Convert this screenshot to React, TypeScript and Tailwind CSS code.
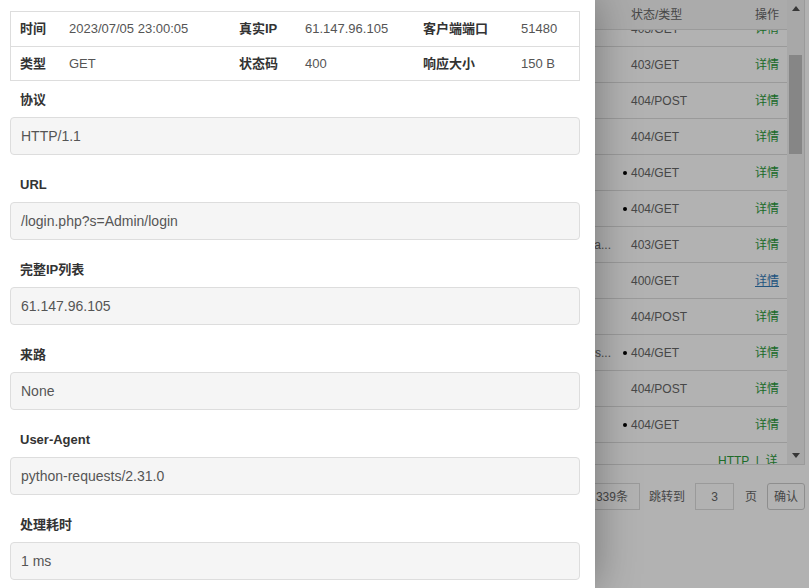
const info = [
  [
    ['时间', '2023/07/05 23:00:05'],
    ['真实IP', '61.147.96.105'],
    ['客户端端口', '51480'],
  ],
  [
    ['类型', 'GET'],
    ['状态码', '400'],
    ['响应大小', '150 B'],
  ],
]

const fields = [
  { label: '协议', value: 'HTTP/1.1' },
  { label: 'URL', value: '/login.php?s=Admin/login' },
  { label: '完整IP列表', value: '61.147.96.105' },
  { label: '来路', value: 'None' },
  { label: 'User-Agent', value: 'python-requests/2.31.0' },
  { label: '处理耗时', value: '1 ms' },
]

type Row = {
  agent?: string
  dot?: boolean
  status: string
  link?: boolean
  action?: string
}

const rows: Row[] = [
  { status: '403/GET' },
  { status: '403/GET' },
  { status: '404/POST' },
  { status: '404/GET' },
  { status: '404/GET', dot: true },
  { status: '404/GET', dot: true },
  {
    agent:
      'Mozilla/5.0 (Windows NT 10.0; Win64; x64) AppleWebKit/537.36 (KHTML, like Gecko) Chrome/92.0 Sa...',
    status: '403/GET',
  },
  { status: '400/GET', link: true },
  { status: '404/POST' },
  {
    agent: 'Mozilla/5.0 (X11; Linux x86_64; rv:60.0) Gecko/20100101 Firefox Windows...',
    status: '404/GET',
    dot: true,
  },
  { status: '404/POST' },
  { status: '404/GET', dot: true },
  { status: '', action: 'HTTP  |  详' },
]

function LogTable() {
  return (
    <div className="flex h-[465px] w-[805px] border-b border-r border-[#ddd]">
      <div className="flex-1 overflow-hidden">
        <div className="flex h-[30px] items-center border-b border-[#ddd] bg-[#f5f5f5] text-[12px] text-[#666]">
          <div className="w-[480px]" />
          <div className="w-[139px]" />
          <div className="w-[124px] pl-3">状态/类型</div>
          <div className="w-[44px] pl-3">操作</div>
        </div>
        <div className="h-[434px] overflow-hidden">
          <div className="-mt-[19px]">
            {rows.map((r, i) => (
              <div
                key={i}
                className="flex h-[36px] items-center border-b border-[#ddd] text-[12px] text-[#666]"
              >
                <div className="w-[480px]" />
                <div className="flex w-[139px] justify-end overflow-hidden whitespace-nowrap pr-2">
                  {r.agent}
                </div>
                <div className="flex w-[124px] items-center whitespace-nowrap pl-3">
                  {r.dot && (
                    <span className="-ml-[8px] mr-[4px] inline-block h-[4px] w-[4px] rounded-full bg-black" />
                  )}
                  {r.status}
                </div>
                <div className="w-[44px] whitespace-nowrap pl-3">
                  {r.action ? (
                    <span className="-ml-[37px] whitespace-pre text-[#2b9a3b]">{r.action}</span>
                  ) : r.link ? (
                    <span className="text-[#337ab7] underline">详情</span>
                  ) : (
                    <span className="text-[#2b9a3b]">详情</span>
                  )}
                </div>
              </div>
            ))}
          </div>
        </div>
      </div>
      {/* scrollbar */}
      <div className="flex w-[17px] flex-col bg-[#f1f1f1]">
        <div className="flex h-[17px] items-center justify-center">
          <svg width="8" height="5" viewBox="0 0 8 5">
            <path d="M0 5 L4 0 L8 5 Z" fill="#505050" />
          </svg>
        </div>
        <div className="flex-1 pt-[38px]">
          <div className="mx-[2px] h-[99px] bg-[#c1c1c1]" />
        </div>
        <div className="flex h-[17px] items-center justify-center">
          <svg width="8" height="5" viewBox="0 0 8 5">
            <path d="M0 0 L4 5 L8 0 Z" fill="#505050" />
          </svg>
        </div>
      </div>
    </div>
  )
}

function Pager() {
  return (
    <div className="mt-[18px] flex w-[805px] items-center justify-end text-[12px] text-[#666]">
      <div className="flex h-[27px] items-center border border-[#ddd] pl-[60px] pr-[11px]">共 339条</div>
      <span className="ml-[9px]">跳转到</span>
      <div className="ml-[10px] flex h-[27px] w-[39px] items-center justify-center border border-[#ddd]">3</div>
      <span className="ml-[11px]">页</span>
      <div className="ml-[10px] flex h-[27px] w-[38px] items-center justify-center rounded-[3px] border border-[#ccc]">
        确认
      </div>
    </div>
  )
}

export default function App() {
  return (
    <div className="relative h-[588px] w-[809px] overflow-hidden bg-white font-['Liberation_Sans','Noto_Sans_CJK_SC',sans-serif]">
      <LogTable />
      <Pager />

      <div className="absolute inset-0 bg-black/30" />

      <div className="absolute left-0 top-0 h-full w-[595px] bg-white pl-[10px] pr-[15px] pt-[11px] shadow-[0_0_40px_rgba(0,0,0,0.35)]">
        <div className="border border-[#ddd] text-[13px]">
          {info.map((row, i) => (
            <div
              key={i}
              className={`grid grid-cols-[49px_170px_66px_118px_98px_67px] items-center ${
                i === 0 ? 'h-[35px] border-b border-[#ddd]' : 'h-[33px]'
              }`}
            >
              {row.map(([k, v]) => (
                <>
                  <div key={k} className="pl-[9px] font-bold text-[#333] whitespace-nowrap">
                    {k}
                  </div>
                  <div key={k + v} className="pl-[9px] text-[#555] whitespace-nowrap">
                    {v}
                  </div>
                </>
              ))}
            </div>
          ))}
        </div>

        {fields.map((f, i) => (
          <div key={f.label} className={i === 0 ? 'mt-[9px]' : 'mt-[20px]'}>
            <div className="h-[20px] pl-[10px] text-[13px] font-bold leading-[20px] text-[#333]">
              {f.label}
            </div>
            <div className="mt-[7px] flex h-[38px] items-center rounded-[4px] border border-[#ddd] bg-[#f5f5f5] px-[10px] text-[14px] text-[#555]">
              {f.value}
            </div>
          </div>
        ))}
      </div>
    </div>
  )
}
